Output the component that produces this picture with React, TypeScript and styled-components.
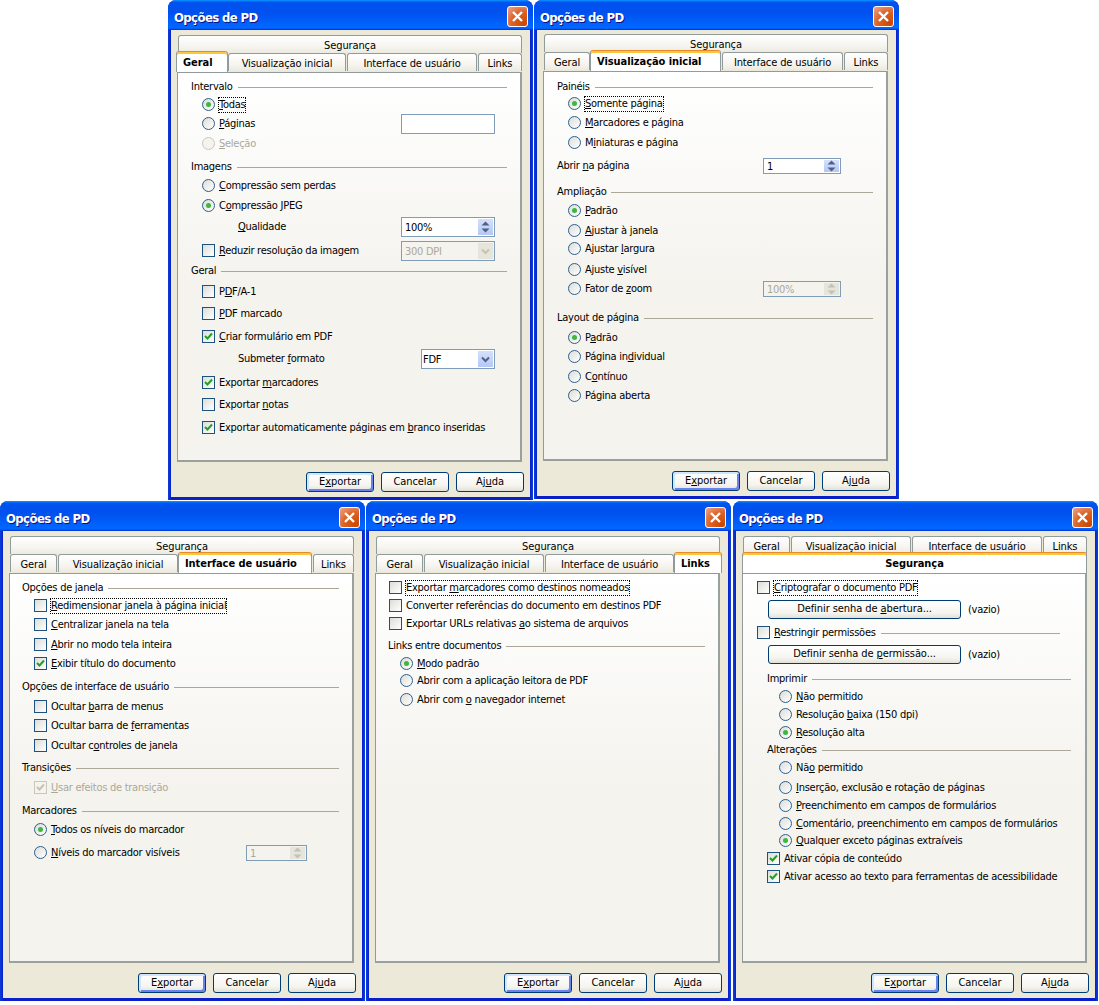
import React from "react";
import styled, { createGlobalStyle } from "styled-components";

const Global = createGlobalStyle`
  html, body { margin: 0; padding: 0; background: #fff; }
  body { width: 1099px; height: 1005px; overflow: hidden; position: relative; }
  #root { font-family: "DejaVu Sans Condensed", "Liberation Sans", sans-serif; font-size: 11px; letter-spacing: -0.26px; color: #000; }
`;

const Desktop = styled.div`
  position: relative;
  width: 1099px;
  height: 1005px;
`;

const Win = styled.section<{ $x: number; $y: number; $h: number }>`
  position: absolute;
  left: ${(p) => p.$x}px;
  top: ${(p) => p.$y}px;
  width: 365px;
  height: ${(p) => p.$h}px;
  display: flex;
  flex-direction: column;
  border-radius: 8px 8px 0 0;
  background: linear-gradient(90deg, #0a3fdc 0, #0a1fc8 3px, #0a1fc8 362px, #0a3fdc 365px);
  overflow: hidden;
`;

const TitleBar = styled.header`
  flex: 0 0 30px;
  box-sizing: border-box;
  display: flex;
  align-items: center;
  justify-content: space-between;
  padding: 3px 5px 0 6px;
  background: linear-gradient(180deg, #0997ff 0%, #0053ee 8%, #0050ee 40%, #0066ff 88%, #0066ff 93%, #005bff 95%, #003dd7 96%, #003dd7 100%);
`;

const Title = styled.h1`
  margin: 1px 0 0;
  color: #fff;
  font: bold 13px "DejaVu Sans Condensed", "Liberation Sans", sans-serif;
  letter-spacing: -0.6px;
  text-shadow: 1px 1px #0f1089;
`;

const Close = styled.button`
  width: 21px;
  height: 21px;
  padding: 0;
  border: 1px solid #fff;
  border-radius: 3px;
  background: radial-gradient(circle at 85% 90%, #cc4600 0%, #dc6527 55%, #e37b4f 70%, #f0a48a 100%);
  display: flex;
  align-items: center;
  justify-content: center;
`;

const Body = styled.div<{ $top: number }>`
  flex: 1;
  min-height: 0;
  margin: 0 3px 3px;
  padding: ${(p) => p.$top}px 6px 0;
  background: #ece9d8;
  display: flex;
  flex-direction: column;
`;

const TabRow = styled.div`
  flex: 0 0 18px;
  display: flex;
  width: 345px;
`;

const Tab = styled.div<{ $active?: boolean; $center?: boolean; $w: number; $gap: number }>`
  box-sizing: border-box;
  flex: 0 0 ${(p) => p.$w}px;
  margin-left: ${(p) => p.$gap}px;
  display: flex;
  align-items: center;
  justify-content: ${(p) => (p.$center ? "center" : "flex-start")};
  border: 1px solid #919b9c;
  border-bottom: 0;
  border-radius: 3px 3px 0 0;
  padding-top: 1px;
  ${(p) =>
    p.$active
      ? `
    height: 21px;
    margin-top: -2px;
    position: relative;
    z-index: 2;
    font-weight: bold;
    letter-spacing: -0.06px;
    padding-left: ${p.$center ? 0 : 6}px;
    background: #fff;
    border-top: 1px solid #e68b2c;
    box-shadow: inset 0 2px #ffc73c;
  `
      : `
    height: 18px;
    letter-spacing: -0.12px;
    background: linear-gradient(180deg, #fff 0%, #f6f5f0 60%, #eceae0 100%);
  `}
`;

const Panel = styled.div`
  box-sizing: border-box;
  width: 345px;
  flex: 1;
  min-height: 0;
  border: 1px solid #919b9c;
  border-right: 2px solid #9aa0a0;
  border-bottom: 2px solid #9aa0a0;
  background: linear-gradient(180deg, #fff 0%, #f4f3ee 55%, #f4f3ee 100%);
  display: flex;
  flex-direction: column;
`;

const Row = styled.div<{ $gap: number; $x: number }>`
  flex: 0 0 16px;
  height: 16px;
  margin-top: ${(p) => p.$gap}px;
  padding-left: ${(p) => p.$x - 1}px;
  display: flex;
  align-items: center;
`;

const Rule = styled.div<{ $inset: number }>`
  flex: 1;
  height: 1px;
  background: #aca899;
  margin-left: 5px;
  margin-right: ${(p) => p.$inset - 2}px;
`;

const Label = styled.span<{ $off?: boolean; $focus?: boolean }>`
  white-space: nowrap;
  line-height: 14px;
  color: ${(p) => (p.$off ? "#aca899" : "#000")};
  outline: ${(p) => (p.$focus ? "1px dotted #000" : "none")};
  outline-offset: 0;
`;

const Radio = styled.span<{ $on?: boolean; $off?: boolean }>`
  box-sizing: border-box;
  flex: 0 0 13px;
  width: 13px;
  height: 13px;
  margin: -1px 4px 0 0;
  border-radius: 50%;
  border: 1px solid ${(p) => (p.$off ? "#cac8bb" : "#2c5f8c")};
  background: ${(p) => (p.$off ? "#f4f3ee" : "linear-gradient(135deg, #dcdcd7, #fff)")};
  display: flex;
  align-items: center;
  justify-content: center;
  &::after {
    content: "";
    width: 5px;
    height: 5px;
    border-radius: 50%;
    background: ${(p) => (p.$on ? "#3fb63f" : "transparent")};
  }
`;

const Check = styled.span<{ $off?: boolean }>`
  box-sizing: border-box;
  flex: 0 0 13px;
  width: 13px;
  height: 13px;
  margin: -1px 4px 0 0;
  border: 1px solid ${(p) => (p.$off ? "#cac8bb" : "#1c5180")};
  background: ${(p) => (p.$off ? "#f4f3ee" : "linear-gradient(135deg, #dcdcd7, #fff)")};
  display: flex;
  align-items: center;
  justify-content: center;
`;

const Field = styled.div<{ $w: number; $h: number; $inset: number; $off?: boolean; $pad: number }>`
  box-sizing: border-box;
  flex: 0 0 ${(p) => p.$w}px;
  width: ${(p) => p.$w}px;
  height: ${(p) => p.$h}px;
  margin-left: auto;
  margin-right: ${(p) => p.$inset - 2}px;
  padding: 1px 1px 1px ${(p) => p.$pad}px;
  border: 1.5px solid #7f9db9;
  background: ${(p) => (p.$off ? "#f4f3ee" : "#fff")};
  color: ${(p) => (p.$off ? "#aca899" : "#000")};
  display: flex;
  align-items: center;
  justify-content: space-between;
`;

const SpinBox = styled.span<{ $off?: boolean }>`
  flex: 0 0 15px;
  align-self: stretch;
  background: ${(p) => (p.$off ? "#e6e5dc" : "linear-gradient(180deg, #d6e0fb, #b4c7f5)")};
  display: flex;
  align-items: center;
  justify-content: center;
`;

const Foot = styled.div`
  flex: 0 0 20px;
  margin: 10px 0 5px;
  display: flex;
  justify-content: flex-end;
  gap: 7px;
`;

const Btn = styled.button<{ $def?: boolean; $w?: number; $h?: number }>`
  box-sizing: border-box;
  width: ${(p) => p.$w ?? 68}px;
  height: ${(p) => p.$h ?? 20}px;
  flex-shrink: 0;
  padding: 0 0 1px;
  border: 1px solid #003c74;
  border-radius: 3px;
  font: inherit;
  letter-spacing: -0.08px;
  color: #000;
  background: linear-gradient(180deg, #fff 0%, #f5f4ef 70%, #e3e1d6 100%);
  box-shadow: ${(p) =>
    p.$def ? "inset 2px 2px #cee7ff, inset -2px -2px #6982ee, inset 1px -1px #a4c4f5" : "none"};
`;

const Note = styled.span`
  margin-left: 7px;
`;

const Keyed = ({ text }: { text: string }) => {
  const i = text.indexOf("&");
  if (i < 0) return <>{text}</>;
  return (
    <>
      {text.slice(0, i)}
      <u>{text[i + 1]}</u>
      {text.slice(i + 2)}
    </>
  );
};

const CheckMark = ({ off }: { off?: boolean }) => (
  <svg width="9" height="9" viewBox="0 0 9 9">
    <path d="M1 4 L3.5 6.5 L8 1.5" fill="none" stroke={off ? "#c4c2b4" : "#21a121"} strokeWidth="2" />
  </svg>
);

const SpinArrows = ({ off }: { off?: boolean }) => (
  <svg width="9" height="12" viewBox="0 0 9 12">
    <path d="M4.5 0.5 L8.5 4.5 L0.5 4.5Z M4.5 11.5 L0.5 7.5 L8.5 7.5Z" fill={off ? "#c4c2b4" : "#4d6185"} />
  </svg>
);

const Chevron = ({ off }: { off?: boolean }) => (
  <svg width="9" height="7" viewBox="0 0 9 7">
    <path d="M1 1.5 L4.5 5 L8 1.5" fill="none" stroke={off ? "#c4c2b4" : "#4d6185"} strokeWidth="2" />
  </svg>
);

type FieldSpec = { w: number; h: number; inset: number; kind: "text" | "spin" | "select"; value?: string; off?: boolean; pad?: number };
type Item = {
  y: number;
  x: number;
  k: "head" | "radio" | "check" | "label" | "set";
  t: string;
  on?: boolean;
  off?: boolean;
  focus?: boolean;
  rule?: number;
  field?: FieldSpec;
};

const InputBox = ({ f }: { f: FieldSpec }) => (
  <Field $w={f.w} $h={f.h} $inset={f.inset} $off={f.off} $pad={f.pad ?? 3}>
    <span>{f.value}</span>
    {f.kind === "spin" && (
      <SpinBox $off={f.off}>
        <SpinArrows off={f.off} />
      </SpinBox>
    )}
    {f.kind === "select" && (
      <SpinBox $off={f.off}>
        <Chevron off={f.off} />
      </SpinBox>
    )}
  </Field>
);

const PanelRow = ({ it, gap }: { it: Item; gap: number }) => {
  return (
    <Row $gap={gap} $x={it.x}>
      {it.k === "radio" && <Radio $on={it.on} $off={it.off} />}
      {it.k === "check" && <Check $off={it.off}>{it.on && <CheckMark off={it.off} />}</Check>}
      {it.k === "set" ? (
        <>
          <Btn $w={193} $h={19}>
            <Keyed text={it.t} />
          </Btn>
          <Note>(vazio)</Note>
        </>
      ) : (
        <Label $off={it.off} $focus={it.focus}>
          <Keyed text={it.t} />
        </Label>
      )}
      {it.rule !== undefined && <Rule $inset={it.rule} />}
      {it.field && <InputBox f={it.field} />}
    </Row>
  );
};

type TabSpec = { t: string; x0: number; x1: number; active?: boolean; wide?: boolean };

const TabLine = ({ tabs }: { tabs: TabSpec[] }) => (
  <TabRow>
    {tabs.map((tab, i) => (
      <Tab
        key={tab.t}
        $active={tab.active}
        $center={!tab.active || tab.wide}
        $w={tab.x1 - tab.x0}
        $gap={tab.x0 - (i ? tabs[i - 1].x1 : 0)}
      >
        {tab.t}
      </Tab>
    ))}
  </TabRow>
);

type Dialog = {
  x: number;
  y: number;
  h: number;
  bodyTop: number;
  panelTop: number;
  row1: TabSpec[];
  row2: TabSpec[];
  items: Item[];
};

const Window = ({ d }: { d: Dialog }) => (
  <Win $x={d.x} $y={d.y} $h={d.h}>
    <TitleBar>
      <Title>Opções de PD</Title>
      <Close aria-label="Fechar">
        <svg width="13" height="13" viewBox="0 0 13 13">
          <path d="M2 2 L11 11 M11 2 L2 11" stroke="#fff" strokeWidth="2.4" />
        </svg>
      </Close>
    </TitleBar>
    <Body $top={d.bodyTop}>
      <TabLine tabs={d.row1} />
      <TabLine tabs={d.row2} />
      <Panel>
        {d.items.map((it, i) => (
          <PanelRow key={i} it={it} gap={i ? it.y - d.items[i - 1].y - 16 : it.y - 8 - d.panelTop} />
        ))}
      </Panel>
      <Foot>
        <Btn $def>
          E<u>x</u>portar
        </Btn>
        <Btn>Cancelar</Btn>
        <Btn>
          Aj<u>u</u>da
        </Btn>
      </Foot>
    </Body>
  </Win>
);

const seg: TabSpec[] = [{ t: "Segurança", x0: 1, x1: 345 }];

const geral: Item[] = [
  { y: 86, x: 14, k: "head", t: "Intervalo", rule: 15 },
  { y: 104, x: 25, k: "radio", t: "&Todas", on: true, focus: true },
  { y: 123, x: 25, k: "radio", t: "&Páginas", field: { w: 94, h: 20, inset: 27, kind: "text" } },
  { y: 143, x: 25, k: "radio", t: "&Seleção", off: true },
  { y: 166, x: 14, k: "head", t: "Imagens", rule: 15 },
  { y: 185, x: 25, k: "radio", t: "&Compressão sem perdas" },
  { y: 205, x: 25, k: "radio", t: "C&ompressão JPEG", on: true },
  { y: 226, x: 61, k: "label", t: "&Qualidade", field: { w: 94, h: 20, inset: 27, kind: "spin", value: "100%" } },
  { y: 250, x: 25, k: "check", t: "&Reduzir resolução da imagem", field: { w: 94, h: 20, inset: 27, kind: "select", value: "300 DPI", off: true } },
  { y: 270, x: 14, k: "head", t: "Geral", rule: 15 },
  { y: 291, x: 25, k: "check", t: "P&DF/A-1" },
  { y: 313, x: 25, k: "check", t: "&PDF marcado" },
  { y: 336, x: 25, k: "check", t: "&Criar formulário em PDF", on: true },
  { y: 358, x: 61, k: "label", t: "Submeter &formato", field: { w: 74, h: 20, inset: 27, kind: "select", value: "FDF", pad: 1 } },
  { y: 382, x: 25, k: "check", t: "Exportar &marcadores", on: true },
  { y: 404, x: 25, k: "check", t: "Exportar &notas" },
  { y: 427, x: 25, k: "check", t: "Exportar automaticamente páginas em &branco inseridas", on: true },
];

const vis: Item[] = [
  { y: 86, x: 14, k: "head", t: "Painéis", rule: 15 },
  { y: 103, x: 25, k: "radio", t: "&Somente página", on: true, focus: true },
  { y: 122, x: 25, k: "radio", t: "&Marcadores e página" },
  { y: 142, x: 25, k: "radio", t: "M&iniaturas e página" },
  { y: 165, x: 14, k: "label", t: "Abrir &na página", field: { w: 78, h: 16, inset: 47, kind: "spin", value: "1" } },
  { y: 191, x: 14, k: "head", t: "Ampliação", rule: 15 },
  { y: 210, x: 25, k: "radio", t: "&Padrão", on: true },
  { y: 230, x: 25, k: "radio", t: "&Ajustar à janela" },
  { y: 248, x: 25, k: "radio", t: "Ajustar &largura" },
  { y: 269, x: 25, k: "radio", t: "Ajuste &visível" },
  { y: 288, x: 25, k: "radio", t: "Fator de &zoom", field: { w: 78, h: 16, inset: 47, kind: "spin", value: "100%", off: true } },
  { y: 317, x: 14, k: "head", t: "Layout de página", rule: 15 },
  { y: 337, x: 25, k: "radio", t: "P&adrão", on: true },
  { y: 356, x: 25, k: "radio", t: "Página in&dividual" },
  { y: 376, x: 25, k: "radio", t: "C&ontínuo" },
  { y: 395, x: 25, k: "radio", t: "Pá&gina aberta" },
];

const iface: Item[] = [
  { y: 587, x: 13, k: "head", t: "Opções de janela", rule: 15 },
  { y: 605, x: 25, k: "check", t: "&Redimensionar janela à página inicial", focus: true },
  { y: 624, x: 25, k: "check", t: "&Centralizar janela na tela" },
  { y: 644, x: 25, k: "check", t: "&Abrir no modo tela inteira" },
  { y: 663, x: 25, k: "check", t: "&Exibir título do documento", on: true },
  { y: 686, x: 13, k: "head", t: "Opções de interface de usuário", rule: 15 },
  { y: 706, x: 25, k: "check", t: "Ocultar &barra de menus" },
  { y: 725, x: 25, k: "check", t: "Ocultar barra de &ferramentas" },
  { y: 745, x: 25, k: "check", t: "Ocultar c&ontroles de janela" },
  { y: 767, x: 13, k: "head", t: "Transições", rule: 15 },
  { y: 787, x: 25, k: "check", t: "&Usar efeitos de transição", on: true, off: true },
  { y: 810, x: 13, k: "head", t: "Marcadores", rule: 15 },
  { y: 829, x: 25, k: "radio", t: "&Todos os níveis do marcador", on: true },
  { y: 852, x: 25, k: "radio", t: "&Níveis do marcador visíveis", field: { w: 61, h: 16, inset: 47, kind: "spin", value: "1", off: true } },
];

const links: Item[] = [
  { y: 587, x: 14, k: "check", t: "Exportar &marcadores como destinos nomeados", focus: true },
  { y: 605, x: 14, k: "check", t: "Converter referências do documento em destinos PDF" },
  { y: 623, x: 14, k: "check", t: "Exportar URLs relativas &ao sistema de arquivos" },
  { y: 645, x: 13, k: "head", t: "Links entre documentos", rule: 15 },
  { y: 663, x: 25, k: "radio", t: "&Modo padrão", on: true },
  { y: 680, x: 25, k: "radio", t: "Abrir com a aplicação leitora de PDF" },
  { y: 699, x: 25, k: "radio", t: "Abrir com &o navegador internet" },
];

const segur: Item[] = [
  { y: 587, x: 15, k: "check", t: "&Criptografar o documento PDF", focus: true },
  { y: 608, x: 26, k: "set", t: "Definir senha de &abertura..." },
  { y: 632, x: 15, k: "check", t: "&Restringir permissões", rule: 27 },
  { y: 653, x: 26, k: "set", t: "Definir senha de &permissão..." },
  { y: 678, x: 25, k: "head", t: "Imprimir", rule: 16 },
  { y: 696, x: 37, k: "radio", t: "&Não permitido" },
  { y: 714, x: 37, k: "radio", t: "Resolução &baixa (150 dpi)" },
  { y: 732, x: 37, k: "radio", t: "&Resolução alta", on: true },
  { y: 749, x: 25, k: "head", t: "Alterações", rule: 16 },
  { y: 767, x: 37, k: "radio", t: "Nã&o permitido" },
  { y: 787, x: 37, k: "radio", t: "&Inserção, exclusão e rotação de páginas" },
  { y: 805, x: 37, k: "radio", t: "&Preenchimento em campos de formulários" },
  { y: 823, x: 37, k: "radio", t: "&Comentário, preenchimento em campos de formulários" },
  { y: 840, x: 37, k: "radio", t: "&Qualquer exceto páginas extraíveis", on: true },
  { y: 858, x: 25, k: "check", t: "Ativar cópia de conteúdo", on: true },
  { y: 876, x: 25, k: "check", t: "Ativar acesso ao texto para ferramentas de acessibilidade", on: true },
];

const tabsOf = (xs: number[][], active: number): TabSpec[] =>
  ["Geral", "Visualização inicial", "Interface de usuário", "Links"].map((t, i) => ({
    t,
    x0: xs[i][0],
    x1: xs[i][1],
    active: i === active,
  }));

const dialogs: Dialog[] = [
  { x: 168, y: 0, h: 500, bodyTop: 5, panelTop: 72, row1: seg, row2: tabsOf([[-1, 51], [51, 169], [170, 300], [301, 345]], 0), items: geral },
  { x: 534, y: 0, h: 499, bodyTop: 4, panelTop: 71, row1: seg, row2: tabsOf([[1, 47], [47, 178], [179, 300], [301, 345]], 1), items: vis },
  { x: 0, y: 501, h: 500, bodyTop: 5, panelTop: 573, row1: seg, row2: tabsOf([[1, 48], [49, 169], [169, 303], [304, 345]], 2), items: iface },
  { x: 366, y: 501, h: 500, bodyTop: 5, panelTop: 573, row1: seg, row2: tabsOf([[1, 48], [49, 169], [170, 299], [299, 347]], 3), items: links },
  {
    x: 733,
    y: 501,
    h: 500,
    bodyTop: 5,
    panelTop: 573,
    row1: tabsOf([[1, 48], [49, 169], [170, 300], [301, 345]], -1),
    row2: [{ t: "Segurança", x0: 0, x1: 345, active: true, wide: true }],
    items: segur,
  },
];

export default function App() {
  return (
    <>
      <Global />
      <Desktop>
        {dialogs.map((d) => (
          <Window key={d.x} d={d} />
        ))}
      </Desktop>
    </>
  );
}
